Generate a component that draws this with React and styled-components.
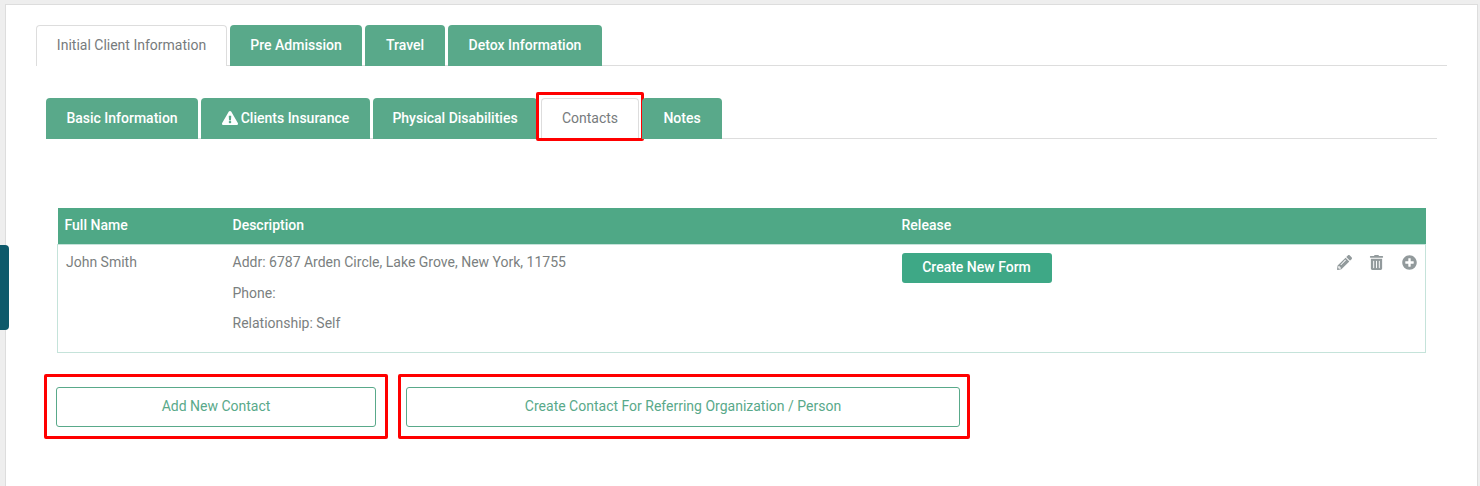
import React from "react";
import styled, { createGlobalStyle } from "styled-components";
import {
  FaExclamationTriangle,
  FaPencilAlt,
  FaPlusCircle,
  FaTrashAlt,
} from "react-icons/fa";

const GlobalStyle = createGlobalStyle`
  html, body {
    margin: 0;
    height: 100%;
    background: #eeeeee;
    font-family: Roboto, "Liberation Sans", sans-serif;
    font-size: 14px;
    color: #7b7f80;
  }
`;

const Page = styled.div`
  position: relative;
  box-sizing: border-box;
  height: 486px;
  overflow: hidden;
  padding: 4px 2px 0 5px;
`;

const SideHandle = styled.div`
  position: absolute;
  left: 0;
  top: 245px;
  width: 9px;
  height: 85px;
  background: #0e5a6b;
  border-radius: 0 4px 4px 0;
`;

const Card = styled.div`
  box-sizing: border-box;
  height: 100%;
  background: #fff;
  border: 1px solid #dddddd;
  border-bottom: none;
  padding: 20px 30px 0;
`;

const TabBar = styled.div`
  display: flex;
  gap: 3px;
  height: 41px;
  border-bottom: 1px solid #dddddd;
  box-sizing: border-box;
`;

const Tab = styled.div`
  position: relative;
  box-sizing: border-box;
  display: flex;
  align-items: center;
  justify-content: center;
  width: ${(p) => p.$width}px;
  height: 41px;
  padding-bottom: 2px;
  border-radius: 4px 4px 0 0;
  background: ${(p) => (p.$active ? "#fff" : "#59a98a")};
  color: ${(p) => (p.$active ? "#777b7d" : "#fff")};
  font-weight: ${(p) => (p.$active ? 400 : 500)};
  border: ${(p) => (p.$active ? "1px solid #dddddd" : "none")};
  border-bottom: none;
  white-space: nowrap;
`;

const WarningIcon = styled(FaExclamationTriangle)`
  margin-right: 3px;
  font-size: 16px;
`;

const Marked = styled.span`
  position: absolute;
  left: -6px;
  top: -7px;
  width: 108px;
  height: 49px;
  box-sizing: border-box;
  border: 3px solid #ff0000;
  border-radius: 2px;
`;

const InnerTabs = styled.div`
  margin: 32px 10px 0;
`;

const InnerBar = styled(TabBar)`
  & > ${Tab}:nth-child(4) {
    margin-left: 1px;
  }
`;

const Section = styled.div`
  margin: 69px 11px 0;
`;

const Table = styled.table`
  width: 100%;
  border-collapse: collapse;
  table-layout: fixed;
`;

const HeadCell = styled.th`
  box-sizing: border-box;
  height: 36px;
  padding: 0 0 2px 8px;
  background: #4fa886;
  color: #fff;
  font-weight: 500;
  text-align: left;

  &:first-child {
    padding-left: 7px;
  }
`;

const BodyRow = styled.tr`
  border: 1px solid #c5e3da;
`;

const Cell = styled.td`
  height: 108px;
  box-sizing: border-box;
  padding: 7px 0 0 8px;
  vertical-align: top;
`;

const NameCell = styled(Cell)`
  padding-top: 9px;
`;

const ReleaseCell = styled(Cell)`
  padding-top: 8px;
`;

const ReleaseRow = styled.div`
  display: flex;
  justify-content: space-between;
  align-items: flex-start;
`;

const Line = styled.div`
  line-height: 20px;
  margin-bottom: 10px;

  &:first-child {
    margin-bottom: 11px;
  }
`;

const FormButton = styled.button`
  display: block;
  width: 150px;
  height: 30px;
  padding: 0 0 2px;
  border: none;
  border-radius: 3px;
  background: #3ea886;
  color: #fff;
  font: 500 14px Roboto, sans-serif;
`;

const Actions = styled.div`
  display: flex;
  align-items: center;
  gap: 18px;
  padding: 2px 8px 0 0;
  color: #929a9c;
  font-size: 15px;
`;

const PencilIcon = styled(FaPencilAlt)`
  margin-right: -1px;
`;

const ButtonRow = styled.div`
  display: flex;
  gap: 10px;
  margin: 21px 0 0 -13px;
`;

const Highlight = styled.div`
  box-sizing: border-box;
  width: ${(p) => p.$width}px;
  height: 65px;
  padding: 10px ${(p) => p.$right}px 9px ${(p) => p.$left}px;
  border: 3px solid #ff0000;
  border-radius: 2px;
`;

const OutlineButton = styled.button`
  display: block;
  width: 100%;
  height: 40px;
  padding: 0 0 2px;
  background: #fff;
  border: 1px solid #59a98a;
  border-radius: 3px;
  color: #59a98a;
  font: 400 14px Roboto, sans-serif;
`;

const App = () => (
  <Page>
    <GlobalStyle />
    <SideHandle />
    <Card>
      <TabBar>
        <Tab $active $width={191}>Initial Client Information</Tab>
        <Tab $width={132}>Pre Admission</Tab>
        <Tab $width={80}>Travel</Tab>
        <Tab $width={154}>Detox Information</Tab>
      </TabBar>
      <InnerTabs>
        <InnerBar>
          <Tab $width={152}>Basic Information</Tab>
          <Tab $width={169}>
            <WarningIcon />
            Clients Insurance
          </Tab>
          <Tab $width={164}>Physical Disabilities</Tab>
          <Tab $active $width={98}>
            <Marked />
            Contacts
          </Tab>
          <Tab $width={80}>Notes</Tab>
        </InnerBar>
        <Section>
          <Table>
            <colgroup>
              <col width="167" />
              <col width="669" />
              <col />
            </colgroup>
            <thead>
              <tr>
                <HeadCell>Full Name</HeadCell>
                <HeadCell>Description</HeadCell>
                <HeadCell>Release</HeadCell>
              </tr>
            </thead>
            <tbody>
              <BodyRow>
                <NameCell>John Smith</NameCell>
                <Cell>
                  <Line>Addr: 6787 Arden Circle, Lake Grove, New York, 11755</Line>
                  <Line>Phone:</Line>
                  <Line>Relationship: Self</Line>
                </Cell>
                <ReleaseCell>
                  <ReleaseRow>
                    <FormButton>Create New Form</FormButton>
                    <Actions>
                      <PencilIcon />
                      <FaTrashAlt />
                      <FaPlusCircle />
                    </Actions>
                  </ReleaseRow>
                </ReleaseCell>
              </BodyRow>
            </tbody>
          </Table>
          <ButtonRow>
            <Highlight $width={344} $left={9} $right={9}>
              <OutlineButton>Add New Contact</OutlineButton>
            </Highlight>
            <Highlight $width={572} $left={5} $right={7}>
              <OutlineButton>Create Contact For Referring Organization / Person</OutlineButton>
            </Highlight>
          </ButtonRow>
        </Section>
      </InnerTabs>
    </Card>
  </Page>
);

export default App;
